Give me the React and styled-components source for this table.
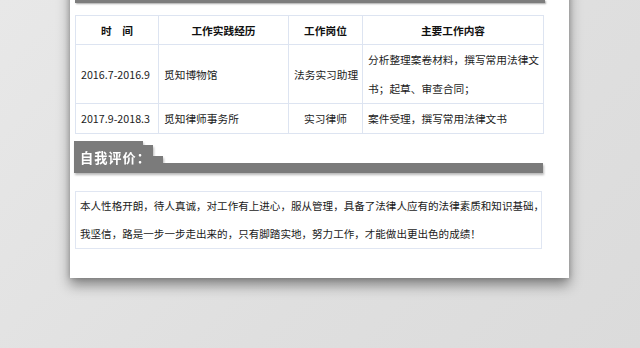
import React from "react";
import styled, { createGlobalStyle } from "styled-components";

const Global = createGlobalStyle`
  html, body { margin: 0; padding: 0; overflow: hidden; }
  body { background: #e1e1e1; }
`;

const Stage = styled.div`
  width: 640px;
  height: 348px;
  overflow: hidden;
  padding-left: 70px;
  box-sizing: border-box;
  background: linear-gradient(135deg, #e8e8e8 0%, #dfdfdf 60%, #dbdbdb 100%);
  font-family: "Noto Sans CJK SC", "Noto Sans", sans-serif;
  color: #1c1c1c;
`;

const Page = styled.div`
  width: 499px;
  box-sizing: border-box;
  margin-top: -20px;
  padding: 20px 26px 29px 5px;
  background: #fff;
  box-shadow: 0 7px 12px rgba(0, 0, 0, 0.42), 0 0 5px rgba(0, 0, 0, 0.18);
`;

const TopBar = styled.div`
  height: 3px;
  margin-right: -2px;
  background: #7d7d7d;
  box-shadow: 1px 1px 2px rgba(0, 0, 0, 0.35);
`;

const Table = styled.table`
  margin-top: 12px;
  width: 468px;
  border-collapse: collapse;
  table-layout: fixed;
  font-size: 10.7px;
`;

const Th = styled.th`
  height: 28px;
  border: 1px solid #dde4f1;
  font-weight: bold;
  text-align: center;
  padding: 0;
  color: #111;
`;

const Td = styled.td`
  border: 1px solid #dde4f1;
  padding: 0 5px;
  line-height: 29px;
  white-space: nowrap;
  text-align: ${(p) => (p.$center ? "center" : "left")};
  color: #1c1c1c;
`;

const Heading = styled.div`
  margin-top: 7px;
  margin-left: -1px;
  display: flex;
  align-items: flex-end;
  height: 32px;
  filter: drop-shadow(1px 2px 1px rgba(0, 0, 0, 0.28));
`;

const Tab = styled.div`
  width: 69px;
  height: 32px;
  box-sizing: border-box;
  padding: 7px 0 0 6px;
  background: #7b7b7b;
  color: #fff;
  font-weight: bold;
  font-size: 13.2px;
  letter-spacing: 1px;
  line-height: 20px;
  white-space: nowrap;
`;

const Step = styled.div`
  width: 10px;
  height: ${(p) => p.$h}px;
  background: #7b7b7b;
`;

const Bar = styled.div`
  flex: 1;
  height: 10px;
  background: #7b7b7b;
`;

const TextBox = styled.div`
  margin-top: 18px;
  width: 467px;
  box-sizing: border-box;
  border: 1px solid #e0e6f2;
  padding: 0 4px;
  font-size: 10.55px;
  line-height: 28px;
  white-space: nowrap;
  color: #1a1a1a;
`;

const rows = [
  {
    time: "2016.7-2016.9",
    org: "觅知博物馆",
    role: "法务实习助理",
    content: ["分析整理案卷材料，撰写常用法律文", "书；起草、审查合同；"],
  },
  {
    time: "2017.9-2018.3",
    org: "觅知律师事务所",
    role: "实习律师",
    content: ["案件受理，撰写常用法律文书"],
  },
];

export default function App() {
  return (
    <>
      <Global />
      <Stage>
        <Page>
          <TopBar />
          <Table>
            <colgroup>
              <col style={{ width: 83 }} />
              <col style={{ width: 130 }} />
              <col style={{ width: 74 }} />
              <col style={{ width: 181 }} />
            </colgroup>
            <thead>
              <tr>
                <Th>时　间</Th>
                <Th>工作实践经历</Th>
                <Th>工作岗位</Th>
                <Th>主要工作内容</Th>
              </tr>
            </thead>
            <tbody>
              {rows.map((r) => (
                <tr key={r.time}>
                  <Td>{r.time}</Td>
                  <Td>{r.org}</Td>
                  <Td $center>{r.role}</Td>
                  <Td>
                    {r.content.map((c, i) => (
                      <React.Fragment key={i}>
                        {i > 0 && <br />}
                        {c}
                      </React.Fragment>
                    ))}
                  </Td>
                </tr>
              ))}
            </tbody>
          </Table>
          <Heading>
            <Tab>自我评价：</Tab>
            <Step $h={28} />
            <Step $h={17} />
            <Bar />
          </Heading>
          <TextBox>
            本人性格开朗，待人真诚，对工作有上进心，服从管理，具备了法律人应有的法律素质和知识基础，
            <br />
            我坚信，路是一步一步走出来的，只有脚踏实地，努力工作，才能做出更出色的成绩！
          </TextBox>
        </Page>
      </Stage>
    </>
  );
}
